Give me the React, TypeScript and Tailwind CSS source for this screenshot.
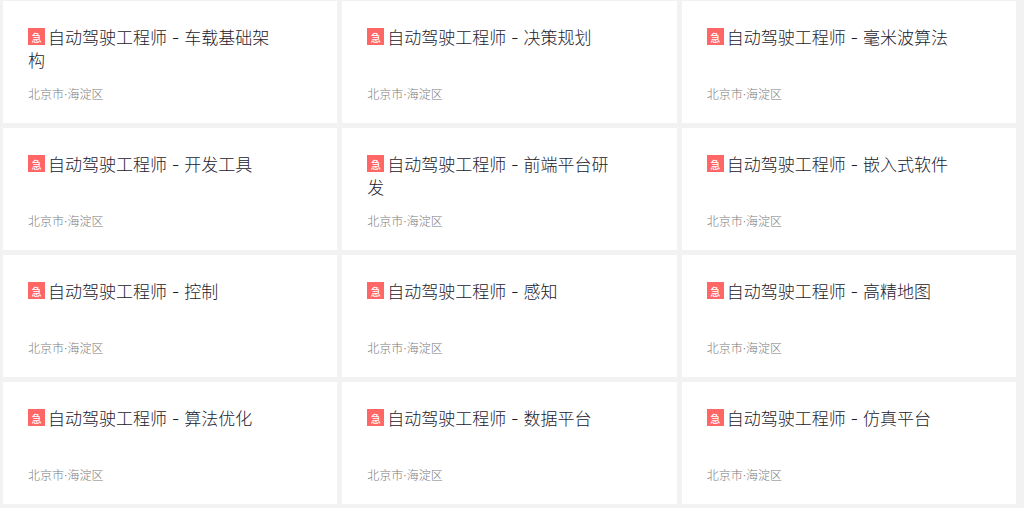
const jobs = [
  { id: 1, title: '自动驾驶工程师 - 车载基础架构' },
  { id: 2, title: '自动驾驶工程师 - 决策规划' },
  { id: 3, title: '自动驾驶工程师 - 毫米波算法' },
  { id: 4, title: '自动驾驶工程师 - 开发工具' },
  { id: 5, title: '自动驾驶工程师 - 前端平台研发' },
  { id: 6, title: '自动驾驶工程师 - 嵌入式软件' },
  { id: 7, title: '自动驾驶工程师 - 控制' },
  { id: 8, title: '自动驾驶工程师 - 感知' },
  { id: 9, title: '自动驾驶工程师 - 高精地图' },
  { id: 10, title: '自动驾驶工程师 - 算法优化' },
  { id: 11, title: '自动驾驶工程师 - 数据平台' },
  { id: 12, title: '自动驾驶工程师 - 仿真平台' },
];

function JobCard({ title }: { title: string }) {
  return (
    <article className="flex min-h-[122px] flex-col justify-between bg-white pt-[26px] pr-[60px] pb-5 pl-[25px]">
      <h2 className="text-[17px] leading-[23px] font-light text-[#1c212c]">
        <span className="mt-px mr-[3px] inline-flex h-[17px] w-[17px] items-center justify-center bg-[#ff6666] pt-[2px] align-top text-[10px] leading-[10px] font-medium text-white">
          急
        </span>
        {title}
      </h2>
      <p className="text-xs leading-4 font-light text-[#7a7a7a]">北京市·海淀区</p>
    </article>
  );
}

export default function App() {
  return (
    <main className="min-h-screen bg-[#f2f2f2] pt-px pr-2 pb-1 pl-[3px] font-['Inter','Noto_Sans_CJK_SC',sans-serif]">
      <div className="grid grid-cols-3 gap-[5px]">
        {jobs.map((job) => (
          <JobCard key={job.id} title={job.title} />
        ))}
      </div>
    </main>
  );
}
